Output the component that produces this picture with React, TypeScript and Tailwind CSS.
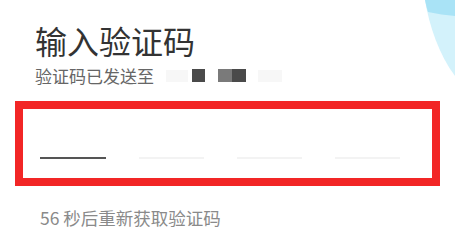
import React from 'react';

export default function App() {
  const cells = [0, 1, 2, 3];

  return (
    <div className="relative w-[455px] h-[248px] bg-white overflow-hidden font-['Noto_Sans_CJK_SC',sans-serif]">
      {/* decorative blue corner */}
      <svg className="absolute top-0 right-0" width="40" height="80" viewBox="0 0 40 80">
        <path d="M10 0 C14 25 24 55 40 76 L40 0 Z" fill="#d3f2fb" />
        <path d="M10 0 C11 5 12 9 13 12 C22 14 31 15 40 16 L40 0 Z" fill="#a9e3f6" />
      </svg>

      <div className="px-[35px] pt-[24px]">
        <h1 className="text-[32px] leading-[32px] text-[#333]">输入验证码</h1>
        <div className="mt-[11px] flex items-center text-[17px] leading-[17px] text-[#666]">
          <span>验证码已发送至</span>
          <span className="ml-[12px] w-[22px] h-[12px] bg-[#f7f7f7]" />
          <span className="ml-[4px] w-[13px] h-[13px] bg-[#4a4a4a]" />
          <span className="ml-[13px] w-[14px] h-[13px] bg-[#7a7a7a]" />
          <span className="w-[14px] h-[13px] bg-[#4a4a4a]" />
          <span className="ml-[12px] w-[24px] h-[12px] bg-[#f7f7f7]" />
        </div>
      </div>

      <div className="mx-[15px] mt-[17px] h-[85px] border-[8px] border-[#f22626] flex items-start gap-[33px] pl-[17px] pt-[48px]">
        {cells.map((i) => (
          <div
            key={i}
            className={i === 0 ? 'w-[66px] h-[2px] bg-[#555]' : 'w-[65px] h-[2px] bg-[#f3f3f3]'}
          />
        ))}
      </div>

      <p className="pl-[40px] mt-[23px] text-[17.5px] leading-[17px] text-[#8a8a8a]">56 秒后重新获取验证码</p>
    </div>
  );
}
